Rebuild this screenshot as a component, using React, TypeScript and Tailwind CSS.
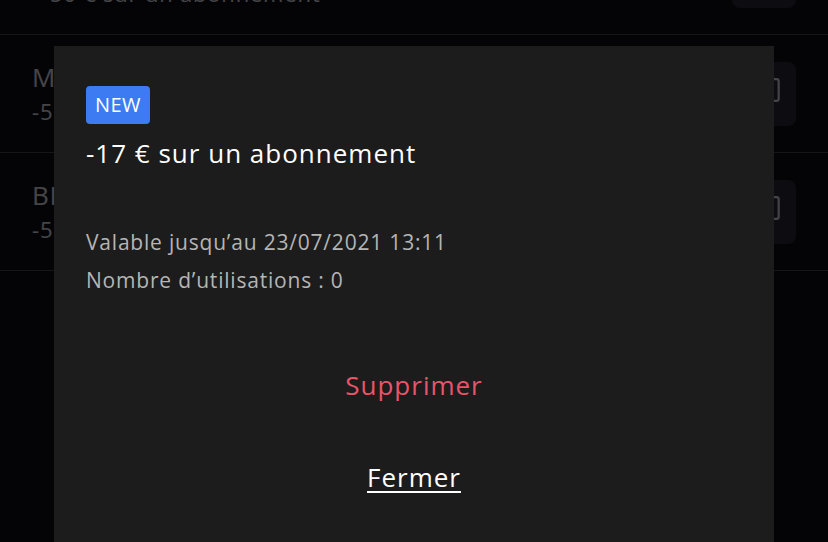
const rows = [
  { title: 'PROMO', sub: '-50 € sur un abonnement', indent: true },
  { title: 'MAI2021', sub: '-5 € sur un abonnement', indent: false },
  { title: 'BLACKFRIDAY', sub: '-5 € sur un abonnement', indent: false },
];

// simple copy glyph, mostly hidden behind the modal
const CopyIcon = () => (
  <svg width="26" height="26" viewBox="0 0 24 24" fill="none" stroke="currentColor" strokeWidth="2" strokeLinecap="round" strokeLinejoin="round">
    <rect x="4" y="2" width="16" height="20" rx="2" />
  </svg>
);

const CouponRow = ({ title, sub, indent }: { title: string; sub: string; indent: boolean }) => (
  <div className="flex h-[118px] items-center justify-between border-b border-[#4a4a55] pr-8">
    <div className={`flex flex-col tracking-[0.8px] ${indent ? 'pl-[42px]' : 'pl-8'}`}>
      <span className="text-[26px] leading-[34px] text-[#e8e8f0]">{title}</span>
      <span className="text-[22px] leading-[34px] text-[#e8e8f0]">{sub}</span>
    </div>
    <button className="flex h-16 w-16 items-center justify-center rounded-lg bg-[#2e2e3a] pb-2 pl-3 text-[#e8e8f0]">
      <CopyIcon />
    </button>
  </div>
);

export default function App() {
  return (
    <div className="relative h-[542px] w-[828px] overflow-hidden bg-[#0e0e1a] font-['Open_Sans',sans-serif]">
      {/* scrolled list behind the modal */}
      <div className="-mt-[83px]">
        {rows.map((r) => (
          <CouponRow key={r.title} {...r} />
        ))}
      </div>

      {/* backdrop */}
      <div className="absolute inset-0 bg-black/70" />

      {/* modal */}
      <div className="absolute left-[54px] top-[46px] h-[520px] w-[720px] bg-[#1c1c1c] px-8 pt-10">
        <span className="inline-flex h-[38px] w-16 items-center justify-center rounded bg-[#3d7bf2] text-[20px] tracking-[0.5px] text-white">
          NEW
        </span>
        <h2 className="mt-[13px] text-[26px] leading-8 font-medium tracking-[1px] text-white">
          -17 € sur un abonnement
        </h2>
        <div className="mt-[54px] text-[21px] leading-[38px] tracking-[0.8px] text-[#b5b5b5]">
          <p>Valable jusqu’au 23/07/2021 13:11</p>
          <p>Nombre d’utilisations : 0</p>
        </div>
        <div className="mt-[70px] flex flex-col items-center text-[26px] leading-8 tracking-[1px]">
          <button className="text-[#e8546a]">Supprimer</button>
          <button className="mt-[60px] text-white underline underline-offset-4">Fermer</button>
        </div>
      </div>
    </div>
  );
}
